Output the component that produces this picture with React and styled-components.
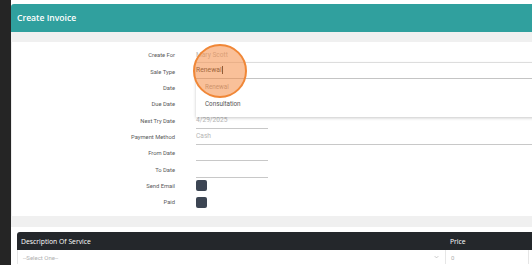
import React from "react";
import styled, { createGlobalStyle } from "styled-components";

const GlobalStyles = createGlobalStyle`
  html, body {
    margin: 0;
    padding: 0;
    background: #ffffff;
    overflow: hidden;
  }
  body {
    font-family: Roboto, "Liberation Sans", sans-serif;
  }
`;

const fields = [
  { label: "Create For", value: "Mary Scott", line: "full", faint: true },
  { label: "Sale Type", popup: true },
  { label: "Date", line: "short" },
  { label: "Due Date", line: "short" },
  { label: "Next Try Date", value: "4/29/2025", line: "short" },
  { label: "Payment Method", value: "Cash", line: "full" },
  { label: "From Date", line: "short" },
  { label: "To Date", line: "short" },
  { label: "Send Email", check: true },
  { label: "Paid", check: true },
];

export default function App() {
  return (
    <>
      <GlobalStyles />
      <StyledPage>
        <StyledSidebar />
        <StyledMain>
          <StyledHeader>
            <StyledTitle>Create Invoice</StyledTitle>
          </StyledHeader>
          <StyledBand />
          <StyledCard>
            <StyledForm>
              {fields.map((f) => (
                <React.Fragment key={f.label}>
                  <StyledLabel>{f.label}</StyledLabel>
                  <StyledCell>
                    {f.check && <StyledCheck />}
                    {f.line && (
                      <StyledInput $line={f.line} $faint={f.faint}>
                        {f.value}
                      </StyledInput>
                    )}
                    {f.popup && (
                      <>
                        <StyledPopup>
                          <StyledPopupInput>
                            Renewal<StyledCaret />
                          </StyledPopupInput>
                          <StyledOption $muted>Renewal</StyledOption>
                          <StyledOption>Consultation</StyledOption>
                        </StyledPopup>
                        <StyledTouch />
                      </>
                    )}
                  </StyledCell>
                </React.Fragment>
              ))}
            </StyledForm>
          </StyledCard>
          <StyledBand $tall />
          <StyledTableWrap>
            <StyledTable>
              <StyledHeadRow>
                <StyledHeadCell>Description Of Service</StyledHeadCell>
                <StyledHeadCell>Price</StyledHeadCell>
                <StyledHeadCell />
              </StyledHeadRow>
              <StyledBodyRow>
                <StyledBodyCell>
                  <span>--Select One--</span>
                  <StyledChevron viewBox="0 0 8 5">
                    <path d="M1 1l3 3 3-3" fill="none" stroke="#9a9a9a" strokeWidth="0.8" />
                  </StyledChevron>
                </StyledBodyCell>
                <StyledBodyCell>0</StyledBodyCell>
                <StyledBodyCell />
              </StyledBodyRow>
            </StyledTable>
          </StyledTableWrap>
        </StyledMain>
      </StyledPage>
    </>
  );
}

const StyledPage = styled.div`
  display: flex;
  width: 532px;
  height: 265px;
  overflow: hidden;
`;

const StyledSidebar = styled.div`
  width: 11px;
  flex-shrink: 0;
  background: #252525;
`;

const StyledMain = styled.div`
  flex: 1;
  display: flex;
  flex-direction: column;
  padding-top: 4px;
  min-width: 0;
`;

const StyledHeader = styled.div`
  height: 28px;
  background: #30a09e;
  border-radius: 3px 0 0 0;
  display: flex;
  align-items: center;
  padding-left: 6px;
`;

const StyledTitle = styled.div`
  color: #ffffff;
  font-family: "Open Sans", "Noto Sans", sans-serif;
  font-weight: 600;
  font-size: 8.6px;
`;

const StyledBand = styled.div`
  height: ${(p) => (p.$tall ? "11px" : "10px")};
  background: #f0f0f0;
`;

const StyledCard = styled.div`
  background: #ffffff;
  border-left: 1px solid #ececec;
  padding: 5px 0 6px;
`;

const StyledForm = styled.div`
  display: grid;
  grid-template-columns: 163px 1fr;
  grid-auto-rows: 16.35px;
  column-gap: 21px;
`;

const StyledLabel = styled.div`
  display: flex;
  align-items: center;
  justify-content: flex-end;
  font-size: 5.8px;
  color: #5a5a5a;
`;

const StyledCell = styled.div`
  position: relative;
  display: flex;
  align-items: center;
`;

const StyledInput = styled.div`
  box-sizing: border-box;
  height: 100%;
  width: ${(p) => (p.$line === "full" ? "100%" : "72px")};
  border-bottom: 1px solid ${(p) => (p.$faint ? "#e6e6e6" : "#c8c8c8")};
  display: flex;
  align-items: center;
  font-size: 6.6px;
  color: #b5b5b5;
`;

const StyledCheck = styled.div`
  width: 11px;
  height: 11px;
  border-radius: 2px;
  background: #3c4553;
`;

const StyledPopup = styled.div`
  position: absolute;
  left: 0;
  right: -4px;
  top: -0.5px;
  height: 54px;
  background: #ffffff;
  box-shadow: 0 1px 3px rgba(0, 0, 0, 0.22);
  z-index: 2;
`;

const StyledPopupInput = styled.div`
  height: 15px;
  border-bottom: 1px solid #c4c4c4;
  display: flex;
  align-items: center;
  font-size: 6.8px;
  color: #333333;
`;

const StyledCaret = styled.span`
  display: inline-block;
  width: 0.7px;
  height: 8px;
  background: #222;
  margin-left: 0.5px;
`;

const StyledOption = styled.div`
  height: 17px;
  display: flex;
  align-items: center;
  padding-left: 9px;
  font-size: 6.3px;
  color: ${(p) => (p.$muted ? "#9a9a9a" : "#555555")};
`;

const StyledTouch = styled.div`
  position: absolute;
  left: -3px;
  top: -19px;
  width: 50px;
  height: 50px;
  border-radius: 50%;
  border: 2px solid #f08737;
  background: rgba(244, 140, 70, 0.55);
  z-index: 3;
`;

const StyledTableWrap = styled.div`
  flex: 1;
  background: #ffffff;
  padding: 5px 0 0 6px;
`;

const StyledTable = styled.div`
  display: grid;
  grid-template-columns: 429px 83px 1fr;
`;

const StyledHeadRow = styled.div`
  display: contents;
`;

const StyledHeadCell = styled.div`
  height: 18px;
  background: #24272b;
  color: #ffffff;
  font-family: "Open Sans", "Noto Sans", sans-serif;
  font-size: 6.8px;
  display: flex;
  align-items: center;
  padding-left: 4px;
  &:first-child {
    border-radius: 3px 0 0 0;
  }
`;

const StyledBodyRow = styled.div`
  display: contents;
`;

const StyledBodyCell = styled.div`
  height: 14px;
  display: flex;
  align-items: center;
  justify-content: space-between;
  padding: 0 6px 0 5px;
  font-size: 6px;
  color: #b0b0b0;
  border-right: 1px solid #e6e6e6;
  &:first-child {
    border-left: 1px solid #e6e6e6;
  }
`;

const StyledChevron = styled.svg`
  width: 5px;
  height: 4px;
`;
